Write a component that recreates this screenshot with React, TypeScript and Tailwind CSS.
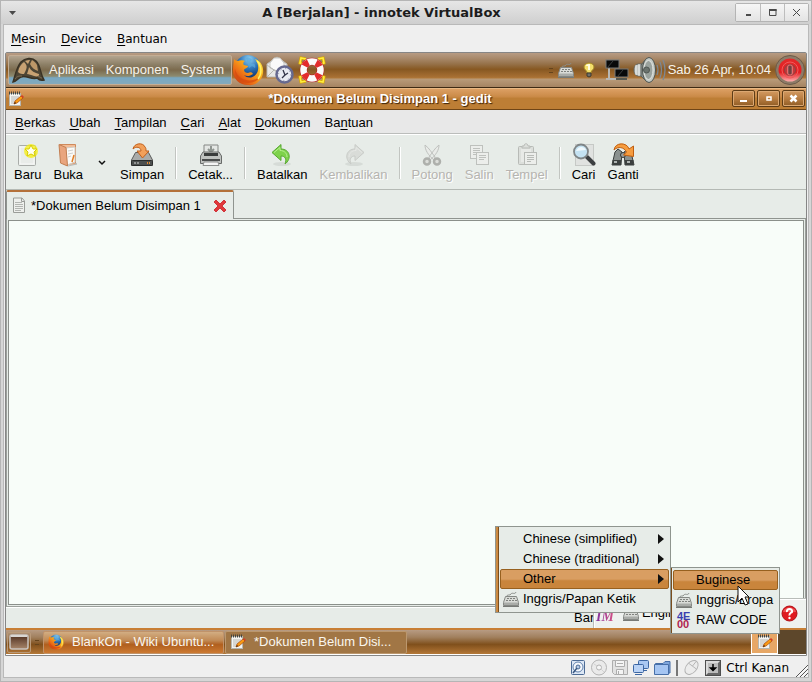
import type { ReactNode } from 'react';

function Accel({ text, at = 0 }: { text: string; at?: number }) {
  return (
    <>
      {text.slice(0, at)}
      <span className="underline underline-offset-2">{text[at]}</span>
      {text.slice(at + 1)}
    </>
  );
}

function HatLogo() {
  return (
    <svg width="34" height="28" viewBox="0 0 34 28" aria-hidden="true">
      <path d="M2 26C4 21 5 12 10 6C14 2 21 1 25 5C30 10 29 18 33 24C30 25 28 24 26 22C21 24 15 19 10 21C7 22 5 26 2 26Z" fill="#4d4535" stroke="#3a3224" strokeWidth="1.500" />
      <path d="M7 16C8 11 10 8 13 6C16 9 17 11 13 18C11 18 9 18 7 16Z" fill="#c8a273" />
      <path d="M14 5C16 4 18 4 19 4L17 8Z" fill="#c8a273" />
      <path d="M19 8L21 4C23 5 25 7 26 9L27 15C24 14 21 12 19 8Z" fill="#bd9768" />
      <path d="M16 18C17 15 18 12 18 11C20 15 24 17 28 18C29 20 26 21 23 20C20 19 18 18 16 18Z" fill="#c8a273" />
      <path d="M4 23C6 20 8 20 11 20" stroke="#7d6c51" fill="none" />
      <path d="M27 20C29 21 30 22 31 22" stroke="#7d6c51" fill="none" />
    </svg>
  );
}

function Firefox({ size }: { size: number }) {
  return (
    <svg width={size} height={size} viewBox="0 0 32 32" aria-hidden="true">
      <defs>
        <radialGradient id="globe" cx="55%" cy="15%" r="80%">
          <stop offset="0" stopColor="#8fd0f2" />
          <stop offset=".45" stopColor="#3079bd" />
          <stop offset="1" stopColor="#0c2760" />
        </radialGradient>
        <linearGradient id="fox" x1="1" y1="0" x2="0" y2="1">
          <stop offset="0" stopColor="#ffec45" />
          <stop offset=".35" stopColor="#fbb11d" />
          <stop offset=".65" stopColor="#ec6d16" />
          <stop offset="1" stopColor="#b92c0c" />
        </linearGradient>
      </defs>
      <circle cx="16" cy="14" r="13" fill="url(#globe)" />
      <path d="M14 4C17 3 19 4 20 6C18 7 18 9 20 10C23 9 24 12 23 14L20 12L17 14" fill="#5aa9dd" opacity=".7" />
      <path d="M2 5C3 6 4 7 6 7C8 6 11 6 13 7C11 8 11 10 12 11L16 12C16 14 13 14 12 16C12 18 14 19 16 19C18 18 20 18 21 20C18 22 15 23 12 21C16 26 25 23 26 16C27 11 25 8 23 5C29 7 32 13 31 19C30 27 23 32 16 31C7 31 0 24 1 15C1 11 2 8 2 5Z" fill="url(#fox)" />
      <path d="M3 15C2 24 9 29 16 29C21 29 26 27 28 22C24 27 15 28 9 24C6 22 4 19 3 15Z" fill="#d54a10" opacity=".75" />
      <path d="M25 7C30 12 30 20 26 25" stroke="#fff36a" strokeWidth="1.500" fill="none" />
    </svg>
  );
}

function MailClock() {
  return (
    <svg width="28" height="30" viewBox="0 0 28 30" aria-hidden="true">
      <path d="M1 9L11 2L21 9V22H1Z" fill="#e8e8e6" stroke="#b9b9b5" />
      <path d="M4 8L8 3H14L18 8V13L11 16L4 13Z" fill="#fafafa" stroke="#c8c8c4" />
      <path d="M1 10L11 17L21 10M1 22L8 15M21 22L14 15" fill="none" stroke="#b5b5b1" />
      <circle cx="18.500" cy="19.500" r="8" fill="#e8ebf2" stroke="#66698f" strokeWidth="2.500" />
      <circle cx="18.500" cy="19.500" r="6" fill="none" stroke="#8d90a5" strokeDasharray="1 3.700" />
      <path d="M17 15L19 20L22 18M19 20L16 23" fill="none" stroke="#303347" strokeWidth="1.300" />
    </svg>
  );
}

function LifeBuoy() {
  return (
    <svg width="28" height="28" viewBox="0 0 28 28" aria-hidden="true">
      <g fill="none" stroke="#d9a600" strokeWidth="3">
        <path d="M8 3L3 2L2 7L5 8M20 3L25 2L26 7L23 8M8 25L3 26L2 21L5 20M20 25L25 26L26 21L23 20" />
      </g>
      <g fill="none" stroke="#ffee3f" strokeWidth="1.600">
        <path d="M8 3L3 2L2 7L5 8M20 3L25 2L26 7L23 8M8 25L3 26L2 21L5 20M20 25L25 26L26 21L23 20" />
      </g>
      <circle cx="14" cy="14" r="8.500" fill="none" stroke="#b81e1e" strokeWidth="7.500" />
      <circle cx="14" cy="14" r="8.500" fill="none" stroke="#fafafa" strokeWidth="6.500" />
      <circle
        cx="14"
        cy="14"
        r="8.500"
        fill="none"
        stroke="#e32c2c"
        strokeWidth="6.500"
        strokeDasharray="5.350 8"
        strokeDashoffset="-4"
      />
    </svg>
  );
}

function Keyboard() {
  return (
    <svg width="18" height="17" viewBox="0 0 18 17" aria-hidden="true">
      <path d="M5 5C5 3 8 5 9 3S13 4 14 1" fill="none" stroke="#8b8e8a" />
      <path d="M3.500 5.500H14.500L16.500 11.500V14.500H1.500V11.500Z" fill="#d9dbd7" stroke="#858884" />
      <path d="M2 11.500H16V14H2Z" fill="#a9aca8" />
      <path d="M5 7.500H14M4 9.500H15" stroke="#7f827e" strokeDasharray="2 1" />
      <path d="M1 15.500H17" stroke="#777a76" />
    </svg>
  );
}

function Bulb() {
  return (
    <svg width="12" height="16" viewBox="0 0 12 16" aria-hidden="true">
      <path d="M6 1C3 1 1 3 1 5C1 8 4 8 4 11H8C8 8 11 8 11 5C11 3 9 1 6 1Z" fill="#f5df6c" stroke="#a58a27" />
      <path d="M4 4C4 3 5 3 6 3V8" stroke="#fffde0" strokeWidth="2" fill="none" />
      <path d="M4 11H8V14L6 15L4 14Z" fill="#70706a" stroke="#3e3a30" />
    </svg>
  );
}

function Network() {
  return (
    <svg width="24" height="22" viewBox="0 0 24 22" aria-hidden="true">
      <path d="M4 9V19M1 20H16M10 17H20" stroke="#b8b8b4" strokeWidth="2" />
      <rect x="1" y="1" width="13" height="8" fill="#080909" stroke="#777a7a" />
      <rect x="10" y="10" width="13" height="8" fill="#080909" stroke="#777a7a" />
      <path d="M2 9L8 2M12 18L18 11" stroke="#3a3d3d" />
      <path d="M11 20H22" stroke="#56584f" strokeWidth="2" />
    </svg>
  );
}

function Speaker() {
  return (
    <svg width="33" height="28" viewBox="0 0 33 28" aria-hidden="true">
      <path d="M1 14C1 10 3 8 6 8H9V20H6C3 20 1 18 1 14Z" fill="#c3c7c4" stroke="#656a66" />
      <path d="M3 9V19M6 8V20" stroke="#ecefec" />
      <path d="M8 9L14 2V26L8 20Z" fill="#8e9490" stroke="#5b605c" />
      <ellipse cx="16" cy="14" rx="6.500" ry="12.500" fill="#c3c9c4" stroke="#4d524e" />
      <ellipse cx="15.500" cy="14" rx="4.500" ry="9.500" fill="#9aa29d" stroke="#e1e4e1" />
      <circle cx="13.500" cy="14" r="3" fill="#6b736e" stroke="#4f5652" />
      <path d="M24 9Q26 14 24 19M27 6Q30 14 27 22M30 4Q34 14 30 24" fill="none" stroke="#7d8894" strokeWidth="1.300" />
    </svg>
  );
}

function Power() {
  return (
    <svg width="30" height="30" viewBox="0 0 30 30" aria-hidden="true">
      <defs>
        <linearGradient id="pw" x1="0" y1="0" x2="0" y2="1">
          <stop offset="0" stopColor="#e32a2a" />
          <stop offset=".6" stopColor="#e21e22" />
          <stop offset="1" stopColor="#ffb0b0" />
        </linearGradient>
      </defs>
      <circle cx="15" cy="15" r="14.500" fill="#8d7b68" stroke="#6d5b48" />
      <circle cx="15" cy="15" r="11.500" fill="url(#pw)" />
      <circle cx="15" cy="15" r="8" fill="none" stroke="#f25a5a" />
      <circle cx="15" cy="15" r="5.500" fill="#c23a3a" stroke="#8f4141" />
      <rect x="12.500" y="10" width="5" height="10" rx="2" fill="#8d5454" stroke="#e86b6b" />
      <path d="M15 11V19" stroke="#5d2929" />
    </svg>
  );
}

function NotePad() {
  return (
    <svg width="16" height="16" viewBox="0 0 16 16" aria-hidden="true">
      <rect x="1.500" y="2.500" width="11" height="12" fill="#f4f4f1" stroke="#b6b6b0" />
      <path d="M1 2H13" stroke="#45453f" strokeWidth="3" strokeDasharray="1 1" />
      <path d="M3 6H11M3 8H11M3 10H9M3 12H8" stroke="#b8b8b4" />
      <path d="M6 13L7 10L13 5L15 7L9 12Z" fill="#fa9a12" stroke="#a6470b" strokeWidth=".7" />
      <path d="M6 13L7 11L8 12Z" fill="#2b1a0c" />
      <path d="M13 5L14 4L16 6L15 7Z" fill="#d73a27" />
    </svg>
  );
}

function IconNew() {
  return (
    <svg width="24" height="24" viewBox="0 0 24 24" aria-hidden="true">
      <rect x="2.500" y="2.500" width="17" height="20" rx="1" fill="#e9ece9" stroke="#a9aca9" />
      <rect x="4" y="4" width="14" height="17" fill="none" stroke="#f8f9f8" />
      <circle cx="15" cy="8" r="7" fill="#f5ef12" opacity=".75" />
      <path d="M15 2L17 6L21 6L18 9L19 13L15 11L11 13L12 9L9 6L13 6Z" fill="#fffff0" stroke="#d9ce00" />
    </svg>
  );
}

function IconOpen() {
  return (
    <svg width="24" height="24" viewBox="0 0 24 24" aria-hidden="true">
      <path d="M4 1.500H19.500V21H8Z" fill="#f3bd97" stroke="#cf8a5c" />
      <path d="M10 5L19 4V19L11 22Z" fill="#fbfaf7" stroke="#d1cdc6" />
      <path d="M12 8L17 7M12 11L17 10M12 14L15 13" stroke="#cfd0cf" />
      <path d="M18 12L16 19" stroke="#e37e22" strokeWidth="1.500" />
      <path d="M3 1.500L10 4.500L11.500 23L4.500 20Z" fill="#e9a57e" stroke="#c37f52" />
      <path d="M12 23L21 21L19 20" fill="none" stroke="#b9bcb9" />
    </svg>
  );
}

function IconSave() {
  return (
    <svg width="24" height="24" viewBox="0 0 24 24" aria-hidden="true">
      <path d="M5.500 9.500H18.500L22.500 17V22.500H1.500V17Z" fill="#a9aba9" stroke="#5b5d5c" />
      <rect x="1.500" y="17.500" width="21" height="5" rx="1" fill="#4c4f4e" stroke="#2a2c2b" />
      <path d="M4 20H10" stroke="#d9dbd9" strokeDasharray="2 1" />
      <path d="M17 20H21" stroke="#e88b2f" strokeWidth="2" strokeDasharray="1 1" />
      <path d="M3 6C4 0 13 -1 15 4C16 5 16 6 16 8H19L12.500 15L7 8H11C11 4 6 3 3 6Z" fill="#f2a05a" stroke="#c1601c" />
    </svg>
  );
}

function IconPrint() {
  return (
    <svg width="24" height="24" viewBox="0 0 24 24" aria-hidden="true">
      <path d="M5 12V2H19V12" fill="#e4e7e4" stroke="#858885" />
      <path d="M12 3V8M9 6L12 9L15 6" fill="none" stroke="#8f9590" strokeWidth="2" />
      <path d="M4 9L1.500 13V20.500H22.500V13L20 9Z" fill="#bfc2bf" stroke="#686b69" />
      <path d="M5 13V10H19V13Z" fill="#393c3b" />
      <path d="M3 17H21" stroke="#4a4d4c" strokeWidth="2" />
      <path d="M5 19H19L20 22.500H4Z" fill="#f4f5f4" stroke="#8d908e" />
    </svg>
  );
}

function IconUndo({ redo = false }: { redo?: boolean }) {
  return (
    <svg width="24" height="24" viewBox="0 0 24 24" aria-hidden="true" className={redo ? '-scale-x-100' : ''}>
      <ellipse cx="12" cy="21" rx="9" ry="2" fill="#cbd0cb" opacity=".6" />
      <path
        d="M2 9.500L11 1.500V6C20 6 22 16 15 21C17 16 15 13 11 13V17.500Z"
        fill={redo ? '#d9dcd8' : '#7ed24b'}
        stroke={redo ? '#c8cbc7' : '#58a832'}
      />
      <path d="M4 9.500L10 4.500V7.500C15 7.500 17 11 17 14" fill="none" stroke={redo ? '#e6e8e5' : '#b6f090'} />
    </svg>
  );
}

function IconCut() {
  return (
    <svg width="24" height="24" viewBox="0 0 24 24" aria-hidden="true">
      <path d="M5 2C5 7 8 12 14 17L15 14C12 10 9 5 5 2ZM19 2C19 7 16 12 10 17L9 14C12 10 15 5 19 2Z" fill="#e9ebe8" stroke="#bfc1be" />
      <circle cx="7" cy="18.500" r="3" fill="#dcdeda" stroke="#aeb0ac" strokeWidth="2.500" />
      <circle cx="17" cy="18.500" r="3" fill="#dcdeda" stroke="#aeb0ac" strokeWidth="2.500" />
    </svg>
  );
}

function IconCopy() {
  return (
    <svg width="24" height="24" viewBox="0 0 24 24" aria-hidden="true" fill="#eceeeb" stroke="#bec1bd">
      <rect x="3.500" y="2.500" width="12" height="13" />
      <path d="M6 5.500H13M6 7.500H13M6 9.500H13M6 11.500H11" />
      <rect x="9.500" y="9.500" width="12" height="12" />
      <path d="M12 12.500H19M12 14.500H19M12 16.500H17" />
    </svg>
  );
}

function IconPaste() {
  return (
    <svg width="24" height="24" viewBox="0 0 24 24" aria-hidden="true" fill="#dcdfdb" stroke="#b8bbb7">
      <rect x="3.500" y="3.500" width="15" height="18" rx="1" />
      <rect x="6" y="6" width="10" height="13" fill="#e8eae7" stroke="none" />
      <path d="M7 5V3H9C9 0 13 0 13 3H15V5Z" />
      <rect x="9.500" y="9.500" width="12" height="12" fill="#eceeeb" />
      <path d="M12 12.500H19M12 14.500H19M12 16.500H19M12 18.500H16" />
    </svg>
  );
}

function IconFind() {
  return (
    <svg width="24" height="24" viewBox="0 0 24 24" aria-hidden="true">
      <rect x="3.500" y="1.500" width="18" height="21" fill="#e0e2e0" stroke="#c6c9c6" />
      <path d="M15 14L21.500 20.500" stroke="#3c3f41" strokeWidth="4" strokeLinecap="round" />
      <circle cx="9" cy="8.500" r="7" fill="#c4e2f2" stroke="#7f8587" strokeWidth="1.800" />
      <path d="M4 8C6 3 12 3 14 7Z" fill="#f0f9fd" />
    </svg>
  );
}

function IconReplace() {
  return (
    <svg width="24" height="24" viewBox="0 0 24 24" aria-hidden="true">
      <path d="M4 9L7 6L11 9L10 22H1Z M13 9L17 6L20 9L23 22H14Z" fill="#8b918f" stroke="#3b3f3e" />
      <path d="M1.500 17H10V22H1.500ZM14 17H22.500V22H14Z" fill="#3c403f" />
      <path d="M3 19H6M16 19H19" stroke="#aeb3b1" strokeWidth="2" />
      <circle cx="12" cy="12" r="2.500" fill="#9a9f9d" stroke="#353938" />
      <path d="M3 7C4 -1 16 -1 18 6L22.500 3V13.500L12.500 12L15.500 9C13 4 7 3 3 7Z" fill="#f69c3f" stroke="#c05f12" />
    </svg>
  );
}

function DocIcon() {
  return (
    <svg width="14" height="17" viewBox="0 0 14 17" aria-hidden="true">
      <path d="M1.500 1H10L12.500 4V15.500H1.500Z" fill="#eef0ed" stroke="#9a9d99" />
      <path d="M3 5.500H10M3 7.500H11M3 9.500H11M3 11.500H11M3 13.500H9" stroke="#b2b5b1" />
      <path d="M9.500 1V4.500H13" fill="none" stroke="#9a9d99" />
    </svg>
  );
}

function RedCross() {
  return (
    <svg width="14" height="14" viewBox="0 0 14 14" aria-hidden="true">
      <path
        d="M3 1L7 5L11 1L13 3L9 7L13 11L11 13L7 9L3 13L1 11L5 7L1 3Z"
        fill="#e0383b"
        stroke="#d0343a"
        strokeLinejoin="round"
      />
    </svg>
  );
}

function ToolButton({ icon, label, disabled = false }: { icon: ReactNode; label: string; disabled?: boolean }) {
  return (
    <button
      type="button"
      disabled={disabled}
      className={
        'flex flex-col items-center px-1.5 ' + (disabled ? 'text-[#b6b4b0] [text-shadow:1px_1px_0_#ffffff]' : 'text-black')
      }
    >
      {icon}
      <span className="leading-4">{label}</span>
    </button>
  );
}

function ToolSeparator() {
  return <div className="mx-[5px] mt-1 h-8 w-0.5 border-l border-r border-l-[#c2c5c1] border-r-white" />;
}

function WinButton({ label, children }: { label: string; children: ReactNode }) {
  return (
    <button
      type="button"
      aria-label={label}
      className="flex h-[17px] w-[23px] items-center justify-center rounded-xs border border-[#5f3d17] bg-linear-to-b from-[#d39a61] via-[#b97d41] via-50% to-[#8f5c24] shadow-[inset_0_0_0_1px_#dba873]"
    >
      <svg width="9" height="9" viewBox="0 0 9 9" aria-hidden="true">
        {children}
      </svg>
    </button>
  );
}

function OuterButton({ label, children }: { label: string; children: ReactNode }) {
  return (
    <button
      type="button"
      aria-label={label}
      className="flex h-[17px] w-6 items-center justify-center border-l border-[#bdbdbd] bg-linear-to-b from-[#f6f6f6] to-[#e4e4e4] first:border-l-0"
    >
      <svg width="9" height="9" viewBox="0 0 9 9" aria-hidden="true" fill="none" stroke="#4a4a4a">
        {children}
      </svg>
    </button>
  );
}

type MenuRow = { label: string; icon?: ReactNode; sub?: boolean; active?: boolean };

function PopupMenu({ rows, label }: { rows: MenuRow[]; label: string }) {
  return (
    <div role="menu" aria-label={label} className="flex border border-[#8f958f] bg-[#e7ece8]">
      <div className="w-[3px] border-r border-[#7a4d1d] bg-[#cc8a42]" />
      <div className="flex flex-1 flex-col px-px pt-0.5 pb-[3px]">
        {rows.map((r) => (
          <button
            key={r.label}
            type="button"
            role="menuitem"
            className={
              'flex h-5 items-center rounded-xs border pr-1 text-left ' +
              (r.active
                ? 'border-[#97601f] bg-linear-to-b from-[#d99e62] from-50% to-[#c9853c] to-60%'
                : 'border-transparent')
            }
          >
            <span className="flex w-[22px] pl-px">{r.icon}</span>
            <span className="flex-1 whitespace-nowrap">{r.label}</span>
            {r.sub && (
              <svg width="6" height="10" viewBox="0 0 6 10" aria-hidden="true">
                <path d="M0 0L6 5L0 10Z" fill="#111" />
              </svg>
            )}
          </button>
        ))}
      </div>
    </div>
  );
}

function RawCode() {
  return (
    <span aria-hidden="true" className="ml-0.5 flex flex-col text-[11px] leading-[8px] font-bold">
      <span className="text-[#3a3fae]">4E</span>
      <span className="text-[#b02450]">00</span>
    </span>
  );
}

function IMToolbar() {
  return (
    <div className="flex h-[30px] w-[213px] items-start border-t border-l border-[#b9bdb9] bg-[#eff2ef] pt-1.5 shadow-[inset_1px_1px_0_#fff]">
      <span className="flex-none bg-linear-to-r from-[#7b2aa0] to-[#e0527f] bg-clip-text px-0.5 pt-1 font-['Liberation_Serif',serif] text-sm leading-4 font-bold text-transparent italic">
        IM
      </span>
      <span className="ml-1.5 flex">
        <Keyboard />
        <span className="ml-0.5 w-[30px] overflow-hidden leading-4">English</span>
      </span>
      <button type="button" aria-label="Help" className="mr-2 ml-auto">
        <svg width="17" height="17" viewBox="0 0 17 17" aria-hidden="true">
          <circle cx="8.500" cy="8.500" r="7.500" fill="#e0191f" stroke="#b01015" />
          <path d="M2 7C3 1 14 1 15 7Z" fill="#f47a7a" opacity=".6" />
          <path d="M6 7C5 3 12 3 11 7C10 8 8 8 8.500 10.500" fill="none" stroke="#fff" strokeWidth="2" />
          <circle cx="8.500" cy="13" r="1.200" fill="#fff" />
        </svg>
      </button>
    </div>
  );
}

const panelBg =
  'bg-[linear-gradient(to_bottom,#b79b83_0%,#a98a6c_15%,#96724a_32%,#875822_48%,#a76f33_70%,#b07838_74%,#b99b7a_76%,#a58462_100%)]';

export default function App() {
  return (
    <div className="flex min-h-screen flex-col border border-[#b5b5b5] bg-[#d6d6d6] font-['Liberation_Sans',Arial,sans-serif] text-[13px] leading-5 text-black">
      <header className="flex h-[23px] items-center bg-linear-to-b from-[#e6e6e6] to-[#cfcfcf] pr-[2px] font-['DejaVu_Sans',sans-serif]">
        <button type="button" aria-label="Menu jendela" className="ml-2 flex w-[7px]">
          <svg width="7" height="4" viewBox="0 0 7 4" aria-hidden="true">
            <path d="M0 0H7L3.500 4Z" fill="#4a4a4a" />
          </svg>
        </button>
        <h1 className="flex-1 pl-3 text-center text-[13px] leading-5 font-bold text-[#1c1c1c]">A [Berjalan] - innotek VirtualBox</h1>
        <div className="flex rounded-xs border border-[#b4b4b4]">
          <OuterButton label="Kecilkan">
            <path d="M2 7H7" strokeWidth="2" />
          </OuterButton>
          <OuterButton label="Besarkan">
            <path d="M1.500 1.500V7.500H8V1.500M1 2H8.500" />
            <path d="M1 2H8.500" strokeWidth="2" />
          </OuterButton>
          <OuterButton label="Tutup">
            <path d="M1 1L8 8M8 1L1 8" />
          </OuterButton>
        </div>
      </header>

      <div className="mx-[2px] mb-[3px] flex flex-1 flex-col border border-[#b9b9b9] bg-[#efefef]">
        <nav className="flex h-[27px] items-center gap-[15px] pl-[7px] font-['DejaVu_Sans',sans-serif] text-xs leading-4">
          <button type="button"><Accel text="Mesin" /></button>
          <button type="button"><Accel text="Device" /></button>
          <button type="button"><Accel text="Bantuan" /></button>
        </nav>

        <div className="relative mx-px flex flex-1 flex-col rounded-t-xs border border-[#868686] bg-[#e7ece8]">
          <div className={'flex h-[35px] items-center border-b border-[#3d2a14] ' + panelBg}>
            <nav className="ml-0.5 flex h-[30px] items-center rounded-xs border border-[#c4ad94] bg-[linear-gradient(to_bottom,#b3a48f_0%,#8d8067_30%,#7b6a4d_50%,#8d8b70_72%,#77a8c4_78%,#84a9ba_100%)] pl-0.5 text-[#f7f3ec]">
              <HatLogo />
              <button type="button" className="ml-1">Aplikasi</button>
              <button type="button" className="ml-3">Komponen</button>
              <button type="button" className="mr-[7px] ml-3">System</button>
            </nav>
            <div className="flex flex-1 items-center gap-0.5">
              <button type="button" aria-label="Firefox"><Firefox size={32} /></button>
              <button type="button" aria-label="Evolution"><MailClock /></button>
              <button type="button" aria-label="Bantuan" className="ml-0.5"><LifeBuoy /></button>
            </div>
            <div className="flex items-center pr-px text-[#f7f3ec]">
              <span className="mr-1 h-[5px] w-1 border-y border-[#65441c]" />
              <Keyboard />
              <span className="ml-2"><Bulb /></span>
              <span className="ml-2.5"><Network /></span>
              <span className="ml-1"><Speaker /></span>
              <time className="mr-1 ml-0.5">Sab 26 Apr, 10:04</time>
              <button type="button" aria-label="Matikan"><Power /></button>
            </div>
          </div>

          <div className="flex h-[22px] items-center gap-0.5 border-b border-[#6f4516] bg-linear-to-b from-[#dea267] via-[#cb8b48] via-40% to-[#bd7e35] to-50% pr-px pl-0.5 shadow-[inset_0_1px_0_#e9b883]">
            <NotePad />
            <h2 className="flex-1 pl-1 text-center text-[13px] font-bold text-white [text-shadow:1px_1px_1px_#3c2208]">
              *Dokumen Belum Disimpan 1 - gedit
            </h2>
            <WinButton label="Kecilkan"><path d="M1 7H8" stroke="#fff" strokeWidth="2" /></WinButton>
            <WinButton label="Besarkan"><rect x="3" y="3" width="4" height="3" fill="none" stroke="#fff" strokeWidth="1.500" /></WinButton>
            <WinButton label="Tutup"><path d="M1.500 1.500L7.500 7.500M7.500 1.500L1.500 7.500" stroke="#fff" strokeWidth="2.500" /></WinButton>
          </div>

          <nav className="flex h-6 items-center border-b border-[#bbbdbb] bg-[#e8e8e8] pt-0.5 pl-0.5">
            {([
              ['Berkas', 0], ['Ubah', 0], ['Tampilan', 0], ['Cari', 0], ['Alat', 0], ['Dokumen', 0], ['Bantuan', 2],
            ] as [string, number][]).map(([t, i]) => (
              <button key={t} type="button" className="px-[7px]"><Accel text={t} at={i} /></button>
            ))}
          </nav>

          <div role="toolbar" aria-label="Bilah alat" className="flex h-14 items-start border-t border-b border-t-white border-b-[#b4b9b4] pt-2 pl-0.5">
            <ToolButton icon={<IconNew />} label="Baru" />
            <ToolButton icon={<IconOpen />} label="Buka" />
            <button type="button" aria-label="Dokumen terbaru" className="flex h-10 w-[25px] items-center justify-center">
              <svg width="8" height="6" viewBox="0 0 8 6" aria-hidden="true">
                <path d="M1 1L4 4L7 1" fill="none" stroke="#111" strokeWidth="1.500" />
              </svg>
            </button>
            <ToolButton icon={<IconSave />} label="Simpan" />
            <ToolSeparator />
            <ToolButton icon={<IconPrint />} label="Cetak..." />
            <ToolSeparator />
            <ToolButton icon={<IconUndo />} label="Batalkan" />
            <ToolButton icon={<IconUndo redo />} label="Kembalikan" disabled />
            <ToolSeparator />
            <ToolButton icon={<IconCut />} label="Potong" disabled />
            <ToolButton icon={<IconCopy />} label="Salin" disabled />
            <ToolButton icon={<IconPaste />} label="Tempel" disabled />
            <ToolSeparator />
            <ToolButton icon={<IconFind />} label="Cari" />
            <ToolButton icon={<IconReplace />} label="Ganti" />
          </div>

          <main className="flex flex-1 flex-col">
            <div className="flex h-[29px]">
              <div role="tab" aria-selected="true" className="flex items-center rounded-t-xs border-t-2 border-r border-l border-t-[#b4713a] border-r-[#8f948f] border-l-[#8f948f] pr-1.5 pl-[5px]">
                <DocIcon />
                <span className="ml-[5px]">*Dokumen Belum Disimpan 1</span>
                <button type="button" aria-label="Tutup tab" className="ml-3"><RedCross /></button>
              </div>
              <div className="flex-1 border-b border-[#8f948f]" />
            </div>
            <div className="flex flex-1 flex-col border-r border-b border-l border-[#9ca19c] p-px">
              <textarea aria-label="Isi dokumen" className="block w-full flex-1 resize-none border border-[#8b908b] bg-[#f8fdf9] outline-none" />
            </div>
          </main>

          <footer className="flex h-[21px] items-center justify-end border-t border-white pr-[213px]">
            <span className="w-[19px] overflow-hidden whitespace-nowrap">Baris</span>
          </footer>

          <div className={'flex h-[27px] items-center border-t-2 border-b border-t-[#c87f35] border-b-white ' +
            'bg-[linear-gradient(to_bottom,#b79b83_0%,#a1805e_30%,#80501c_60%,#a76d30_90%,#b47a3a_100%)] text-[#faf6ef]'}>
            <button type="button" aria-label="Tampilkan desktop" className="ml-px flex h-[21px] w-6 items-center justify-center rounded-xs border border-[#b99a7a]">
              <svg width="20" height="16" viewBox="0 0 20 16" aria-hidden="true">
                <defs>
                  <linearGradient id="desk" x1="0" y1="0" x2="0" y2="1">
                    <stop offset="0" stopColor="#4e2f20" />
                    <stop offset="1" stopColor="#a8866b" />
                  </linearGradient>
                </defs>
                <rect x="1" y="1" width="18" height="14" rx="2" fill="url(#desk)" stroke="#c9c4c0" strokeWidth="1.500" />
                <path d="M2 2H18" stroke="#d9d6d3" strokeWidth="2" />
              </svg>
            </button>
            <span className="mx-1 h-[5px] w-1 border-y border-[#65441c]" />
            <button type="button" className="flex h-[23px] w-[181px] items-center rounded-xs border border-[#c0936a] bg-[linear-gradient(to_bottom,#d2ad82_0%,#c18a55_40%,#b05f1e_60%,#cc7a33_100%)] pl-1">
              <Firefox size={16} />
              <span className="ml-2">BlankOn - Wiki Ubuntu...</span>
            </button>
            <button type="button" className="ml-px flex h-[23px] w-[182px] items-center rounded-xs border border-[#bb976e] bg-[#a17645] pl-1">
              <NotePad />
              <span className="ml-2">*Dokumen Belum Disi...</span>
            </button>
            <div className="flex flex-1 justify-end self-stretch">
              <button type="button" aria-label="gedit" className="flex w-[27px] items-center justify-center border border-white bg-[#e7a766]">
                <NotePad />
              </button>
              <div className="w-7 bg-[#5d472b]" />
            </div>
          </div>

          <div className="absolute right-0 bottom-[27px]"><IMToolbar /></div>
          <div className="absolute right-[135px] bottom-[42px] w-[176px]">
            <PopupMenu
              label="Metode masukan"
              rows={[
                { label: 'Chinese (simplified)', sub: true },
                { label: 'Chinese (traditional)', sub: true },
                { label: 'Other', sub: true, active: true },
                { label: 'Inggris/Papan Ketik', icon: <Keyboard /> },
              ]}
            />
          </div>
          <div className="absolute right-[26px] bottom-[21px] w-[110px]">
            <PopupMenu
              label="Other"
              rows={[
                { label: 'Buginese', active: true },
                { label: 'Inggris/Eropa', icon: <Keyboard /> },
                { label: 'RAW CODE', icon: <RawCode /> },
              ]}
            />
          </div>
          <svg className="absolute right-[56px] bottom-[49px]" width="13" height="21" viewBox="0 0 13 21" aria-hidden="true">
            <path d="M1 1V17L5 13L8 20L11 19L8 12H12Z" fill="#fff" stroke="#111" />
          </svg>
        </div>

        <footer className="flex h-[21px] items-center justify-end gap-[5px] pt-0.5 pl-2 font-['DejaVu_Sans',sans-serif] text-xs">
          <svg width="16" height="17" viewBox="0 0 16 17" aria-label="Hard disk">
            <rect x="1.500" y="1.500" width="13" height="14" rx="1" fill="#dce7f5" stroke="#4c6b95" />
            <circle cx="8" cy="8" r="5" fill="#f5f8fc" stroke="#6080ab" />
            <circle cx="8" cy="8" r="2" fill="#b4c9e6" stroke="#4c6b95" />
            <path d="M3 14L7 9" stroke="#38567f" strokeWidth="1.500" />
          </svg>
          <svg width="16" height="17" viewBox="0 0 16 17" aria-label="CD">
            <circle cx="8" cy="8.500" r="7.500" fill="#eaeaea" stroke="#b3b3b3" />
            <circle cx="8" cy="8.500" r="2.500" fill="#f5f5f5" stroke="#b3b3b3" />
            <path d="M3 5L6 7M10 10L13 13" stroke="#d2d2d2" />
          </svg>
          <svg width="16" height="17" viewBox="0 0 16 17" aria-label="Floppy" fill="#e2e2e2" stroke="#adadad">
            <path d="M.5 1.500H15.500V15.500H2.500L.5 13.500Z" />
            <path d="M3.500 1.500H12.500V7.500H3.500ZM4.500 10.500H11.500V15.500H4.500Z" fill="#f4f4f4" />
            <path d="M6.500 12V15M5 4.500H11" />
          </svg>
          <svg width="16" height="17" viewBox="0 0 16 17" aria-label="Jaringan" stroke="#3c66a3">
            <rect x="5.500" y="1.500" width="10" height="8" rx="1" fill="#a9c7f1" />
            <path d="M9 11.500H14" />
            <rect x=".5" y="5.500" width="10" height="8" rx="1" fill="#b9d2f5" />
            <path d="M2 15.500H9" />
          </svg>
          <svg width="17" height="17" viewBox="0 0 17 17" aria-label="Folder" stroke="#476fa8">
            <path d="M1.500 4.500H9L11 2.500H16V14H1.500Z" fill="#7fa6dc" />
            <path d="M.5 5.500H14.500V15.500H.5Z" fill="#a5c5f2" />
          </svg>
          <span className="h-4 border-l-2 border-[#777]" />
          <svg width="17" height="17" viewBox="0 0 18 17" aria-label="Tetikus" stroke="#b2b2b2">
            <ellipse cx="9" cy="8.500" rx="5.500" ry="8.500" transform="rotate(42 9 8.500)" fill="#ececec" />
            <path d="M6 4L14 10M10 7L14 2" fill="none" />
          </svg>
          <svg width="16" height="16" viewBox="0 0 16 16" aria-label="Tombol host">
            <rect x=".5" y=".5" width="15" height="15" fill="#686868" stroke="#4e4e4e" />
            <path d="M1 1H15L12 4H4V12L1 15Z" fill="#dadada" />
            <rect x="3" y="3" width="10" height="10" fill="#bcbcbc" />
            <path d="M8 4V9M5.500 8L8 10.500L10.500 8Z" fill="#000" stroke="#000" strokeWidth="1.500" />
          </svg>
          <span className="leading-4">Ctrl Kanan</span>
          <svg className="ml-0.5 self-end" width="12" height="12" viewBox="0 0 12 12" aria-hidden="true">
            <path d="M0 12L12 0M4 12L12 4M8 12L12 8" stroke="#555" />
            <path d="M1.500 12L12 1.500M5.500 12L12 5.500" stroke="#fff" />
          </svg>
        </footer>
      </div>
    </div>
  );
}
